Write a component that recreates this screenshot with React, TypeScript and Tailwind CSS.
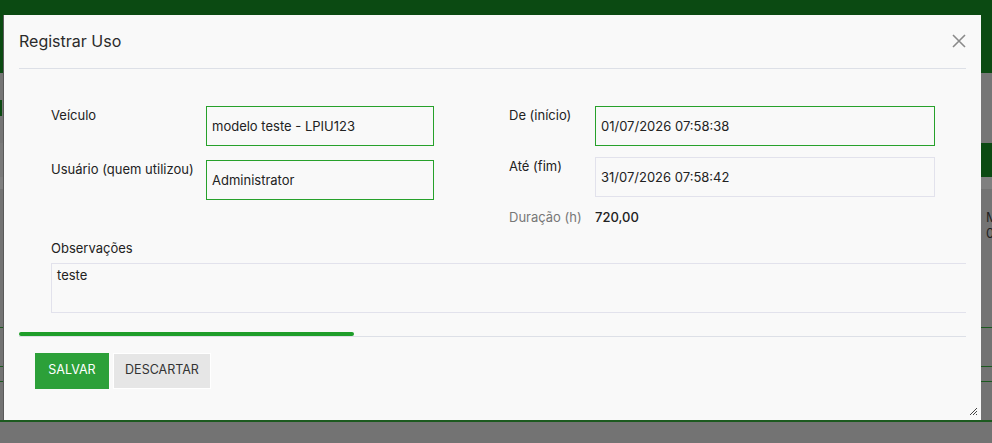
import React from 'react';

const font = { fontFamily: 'Inter, "Noto Sans", sans-serif' };

function Field({
  label,
  value,
  labelWidth,
  focused = true,
}: {
  label: string;
  value: string;
  labelWidth: string;
  focused?: boolean;
}) {
  return (
    <div className="flex items-start">
      <div className={labelWidth + ' pt-[1px] text-[13px] leading-[16px] text-[#222]'}>{label}</div>
      <div
        className={
          'flex h-[40px] flex-1 items-center border px-[5px] pt-[2px] text-[13px] text-[#222] ' +
          (focused ? 'border-[#27a12b]' : 'border-[#e2e2ec]')
        }
      >
        {value}
      </div>
    </div>
  );
}

function Background() {
  return (
    <div className="flex h-full flex-col bg-[#737373]">
      <div className="h-[73px] bg-[#0b4a12]" />
      <div className="relative h-[70px] bg-[#767676]">
        <div className="absolute left-0 top-[27px] h-[16px] w-[2px] bg-[#0b4a12]" />
      </div>
      <div className="flex h-[34px]">
        <div className="flex-1 bg-[#7a7a7a]" />
        <div className="w-[12px] bg-[#0b4a12]" />
      </div>
      <div className="h-[12px] bg-[#808080]" />
      <div className="flex h-[138px] justify-end bg-[#747474] pt-[20px]">
        <div className="w-[6px] overflow-hidden text-[13px] leading-[16px] text-[#222]">
          M<br />0
        </div>
      </div>
      <div className="h-[1px] bg-[#1c5a1f]" />
      <div className="h-[38px]" />
      <div className="h-[1px] bg-[#1c5a1f]" />
      <div className="h-[14px]" />
      <div className="h-[1px] bg-[#1c5a1f]" />
      <div className="h-[38px]" />
      <div className="h-[2px] bg-[#1c5a1f]" />
      <div className="flex-1" />
    </div>
  );
}

export default function App() {
  return (
    <div className="relative h-[443px] w-[992px] overflow-hidden" style={font}>
      <Background />
      <div className="absolute left-[4px] top-[15px] flex h-[405px] w-[977px] flex-col bg-[#f9f9f9] px-[15px] shadow-[-1px_0_0_#5a5a5a]">
        {/* header */}
        <div className="flex h-[54px] items-center justify-between border-b border-[#dde0e7]">
          <h2 className="text-[16px] text-[#2b2b2b]">Registrar Uso</h2>
          <button className="flex h-[20px] w-[14px] items-center justify-end">
            <svg width="14" height="14" viewBox="0 0 14 14">
              <path d="M1 1 L13 13 M13 1 L1 13" stroke="#8a8a8a" strokeWidth="1.6" />
            </svg>
          </button>
        </div>

        {/* body */}
        <div className="relative flex-1 pl-[32px] pt-[37px]">
          <div className="grid grid-cols-[383px_426px] gap-x-[75px]">
            <div className="flex flex-col gap-[14px]">
              <Field labelWidth="w-[155px]" label="Veículo" value="modelo teste - LPIU123" />
              <Field labelWidth="w-[155px]" label="Usuário (quem utilizou)" value="Administrator" />
            </div>
            <div className="flex flex-col gap-[11px]">
              <Field labelWidth="w-[86px]" label="De (início)" value="01/07/2026 07:58:38" />
              <Field labelWidth="w-[86px]" label="Até (fim)" value="31/07/2026 07:58:42" focused={false} />
              <div className="flex items-center text-[13px]">
                <div className="w-[86px] text-[#777]">Duração (h)</div>
                <div className="font-medium text-[#222]">720,00</div>
              </div>
            </div>
          </div>
          <div className="mt-[12px] text-[13px] text-[#222]">Observações</div>
          <div className="mt-[4px] h-[50px] w-full border border-r-0 border-[#e2e2ec] px-[5px] pt-[2px] text-[13px] text-[#222]">
            teste
          </div>
          <div className="relative mt-[19px] -ml-[32px] h-[5px]">
            <div className="absolute bottom-0 left-0 right-0 h-[1px] bg-[#dde0e7]" />
            <div className="absolute left-0 top-0 h-[4px] w-[335px] rounded-full bg-[#1f9e2a]" />
          </div>
        </div>

        {/* footer */}
        <div className="flex h-[84px] items-start gap-[4px] pl-[16px] pt-[16px]">
          <button className="h-[36px] w-[74px] bg-[#2ca039] text-[12.5px] text-white">SALVAR</button>
          <button className="h-[36px] w-[98px] border border-white bg-[#e6e6e6] text-[12.5px] text-[#333]">
            DESCARTAR
          </button>
        </div>

        <svg className="absolute bottom-[5px] right-[4px]" width="8" height="8" viewBox="0 0 8 8">
          <path d="M8 1 L1 8 M8 4 L4 8 M8 7 L7 8" stroke="#444" strokeWidth="1" />
        </svg>
      </div>
    </div>
  );
}
